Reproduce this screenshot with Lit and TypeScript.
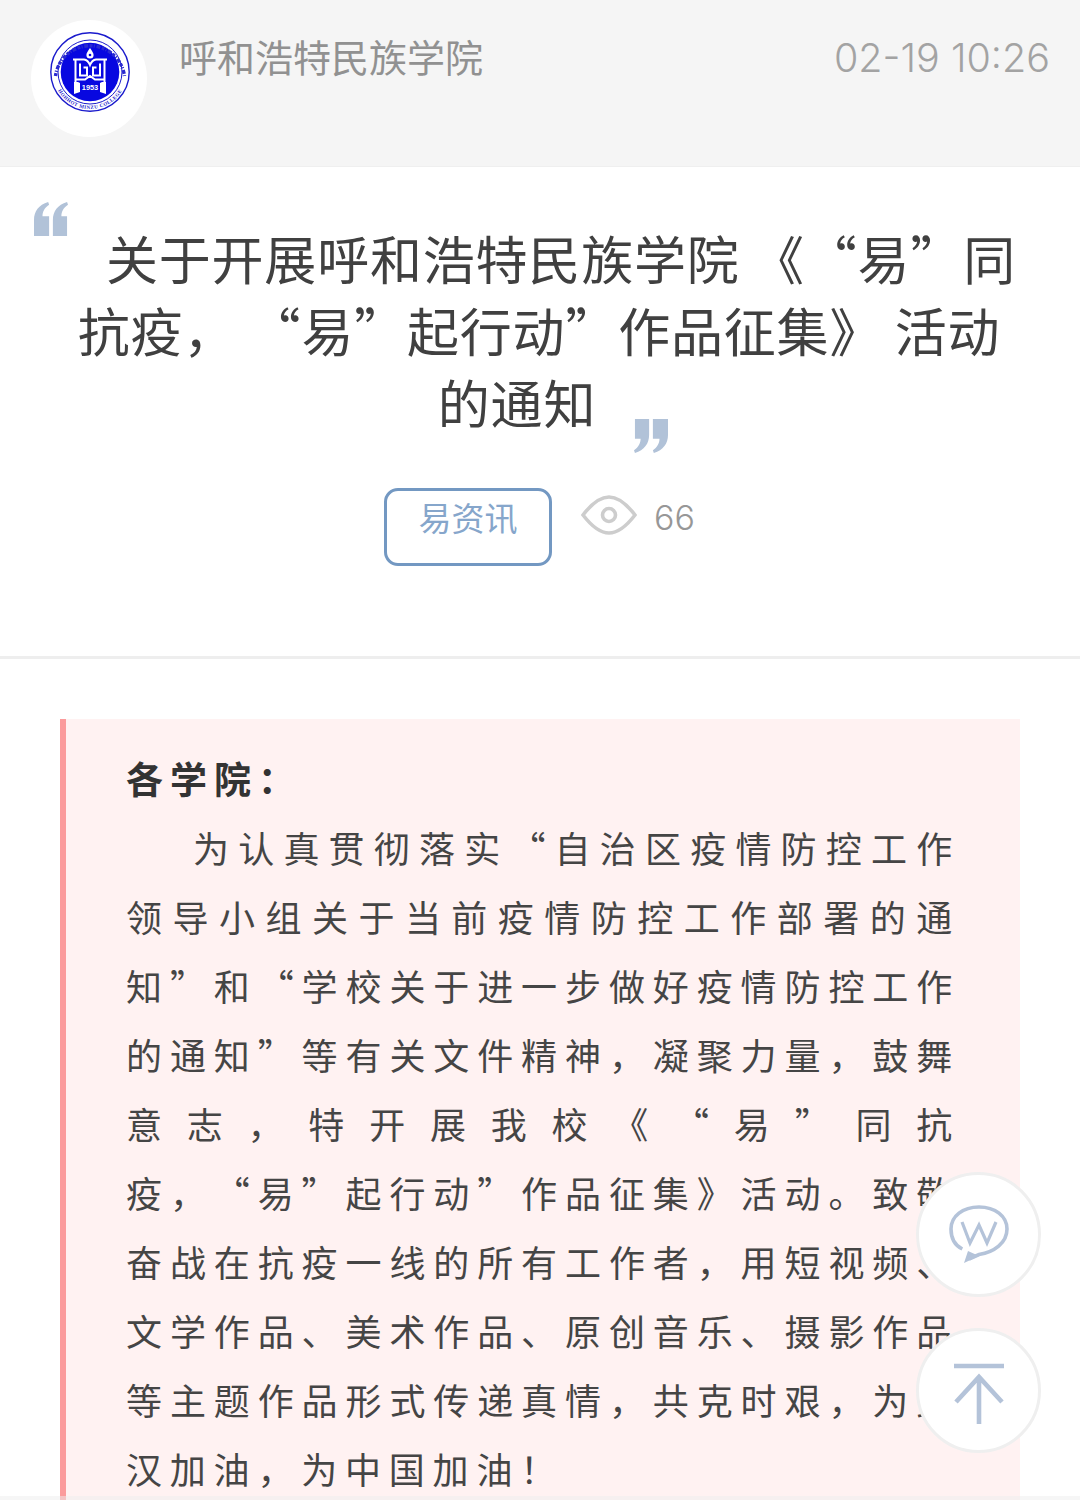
import { LitElement, html, css, svg } from "lit";
import { customElement } from "lit/decorators.js";

@customElement("app-root")
export class AppRoot extends LitElement {
  static styles = css`
    :host { display: block; width: 1080px; height: 1500px; overflow: hidden; position: relative; background: #fff; font-family: "Noto Sans CJK SC", "Noto Sans", sans-serif; text-spacing-trim: space-all; }
    .head { height: 167px; box-sizing: border-box; background: #f5f5f5; border-bottom: 1px solid #efefef; padding: 20px 30px 0 31px; display: flex; align-items: flex-start; }
    .avatar { width: 116px; height: 117px; box-sizing: border-box; padding-bottom: 14px; padding-left: 2px; border-radius: 50%; background: #fff; display: flex; align-items: center; justify-content: center; flex: none; }
    .org { margin-left: 32px; font-size: 38px; line-height: 72px; color: #919191; flex: 1; font-weight: 400; }
    .time { font-size: 39.5px; line-height: 76px; color: #a3a3a3; font-family: Inter, Roboto, sans-serif; font-weight: 300; }
    .hero { height: 492px; box-sizing: border-box; border-bottom: 3px solid #eee; position: relative; padding: 55px 60px 0; }
    .title { font-size: 52px; line-height: 72px; letter-spacing: 0.8px; text-align: center; color: #404040; font-weight: 400; margin: 0; width: 958px; }
    .ph { display: inline-block; width: 44px; height: 1px; }
    .q1 { position: absolute; left: 33px; top: 35px; }
    .q2 { position: absolute; left: 633px; top: 252px; }
    .meta { display: flex; align-items: flex-start; margin-top: 50px; margin-left: 324px; }
    .tag { width: 168px; height: 78px; box-sizing: border-box; border: 3px solid #7398c2; border-radius: 14px; color: #86a6cb; font-size: 33px; line-height: 52px; text-align: center; font-weight: 400; }
    .eye { margin-left: 29px; margin-top: 6px; display: block; }
    .views { margin-left: 17px; font-size: 34px; line-height: 60px; color: #979797; font-family: Inter, Roboto, sans-serif; font-weight: 300; }
    .box { margin: 60px 60px 0; background: #fff2f2; border-left: 6px solid #fb9b9c; padding: 25px 60px 0 60px; height: 790px; }
    .lead { font-size: 37px; line-height: 69px; font-weight: 700; letter-spacing: 7px; color: #333; }
    .body { font-size: 36px; line-height: 69px; letter-spacing: 7.8px; color: #454545; font-weight: 400; }
    .l { display: block; text-align: justify; text-align-last: justify; white-space: nowrap; }
    .l.end { text-align-last: left; }
    .l.ind { padding-left: 67px; }
    .fab { position: absolute; left: 916px; width: 125px; height: 125px; box-sizing: border-box; border-radius: 50%; background: #fff; border: 3px solid #efefef; display: flex; align-items: center; justify-content: center; }
    .f1 { top: 1172px; }
    .f2 { top: 1328px; }
    .up { margin-top: 6px; }
    .fade { position: absolute; left: 0; right: 0; bottom: 0; height: 4px; background: #eeeeee; opacity: .5; }
  `;

  logo() {
    return html`<svg width="84" height="84" viewBox="0 0 84 84">
      <defs>
        <path id="arcb" d="M5 42 A37 37 0 0 0 79 42"></path>
      </defs>
      <circle cx="42" cy="42" r="39.2" fill="#fff" stroke="#1a1acc" stroke-width="1.4"></circle>
      <circle cx="42" cy="42" r="32" fill="none" stroke="#1a1acc" stroke-width="1"></circle>
      <circle cx="42" cy="42" r="29.3" fill="#0808e0"></circle>
      <text font-size="5" font-family="Liberation Serif, serif" font-weight="700" fill="#1a1acc" letter-spacing=".5"><textPath href="#arcb" startOffset="50%" text-anchor="middle">HOHHOT MINZU COLLEGE</textPath></text>
      <path d="M7.5 46 A34.8 34.8 0 0 1 76.5 46" fill="none" stroke="#2a2ad0" stroke-width="3.4" stroke-dasharray="3 1.2 1.2 1.6 4 1.4"></path>
      <g fill="none" stroke="#fff" stroke-width="2">
        <path d="M25 29.5 H36 Q40 30 42 35 Q44 30 48 29.5 H59"></path>
        <path d="M27.5 29.5 V53 M56.5 29.5 V53"></path>
        <path d="M32 33.5 V45.5 H39 V37.5 H35.5 M52 33.5 V45.5 H45 V37.5 H48.5"></path>
        <path d="M27.5 49.5 H37 L42 46 L47 49.5 H56.5"></path>
      </g>
      <path d="M42 18 C44 21 45.6 23 45.6 25 A3.6 3.6 0 0 1 38.4 25 C38.4 23 40 21 42 18 Z" fill="#fff"></path>
      <circle cx="42" cy="25" r="1.3" fill="#0808e0"></circle>
      <path d="M26 52 H30 L32 53 V62 L26 64 Z M58 52 H54 L52 53 V62 L58 64 Z" fill="#fff"></path>
      <text x="42" y="60" font-size="7.4" text-anchor="middle" font-family="Liberation Sans, sans-serif" fill="#fff" font-weight="700">1953</text>
    </svg>`;
  }

  quote(flip: boolean) {
    return svg`<svg width="36" height="34" viewBox="0 0 38 36" style=${flip ? "transform:rotate(180deg)" : ""}>
      <path fill="#b1c2d8" d="M16 0 L17 3 C12 6 10 11 10 15 H17 V36 H1 V19 C1 10 6 3 16 0 Z"></path>
      <path fill="#b1c2d8" d="M36 0 L37 3 C32 6 30 11 30 15 H36 V36 H21 V19 C21 10 26 3 36 0 Z"></path>
    </svg>`;
  }

  render() {
    return html`
      <div class="head">
        <div class="avatar">${this.logo()}</div>
        <div class="org">呼和浩特民族学院</div>
        <div class="time">02-19 10:26</div>
      </div>
      <div class="hero">
        <div class="q1">${this.quote(false)}</div>
        <h1 class="title"><span class="ph"></span>关于开展呼和浩特民族学院 《“易”同抗疫， “易”起行动”作品征集》 活动的通知<span class="ph"></span></h1>
        <div class="q2">${this.quote(true)}</div>
        <div class="meta">
          <div class="tag">易资讯</div>
          <svg class="eye" width="56" height="42" viewBox="0 0 56 42" fill="none" stroke="#cdcdcd" stroke-width="3.6">
            <path d="M2 21 C12 8 20 3 28 3 C36 3 44 8 54 21 C44 34 36 39 28 39 C20 39 12 34 2 21 Z"></path>
            <circle cx="28" cy="21" r="6.5"></circle>
          </svg>
          <div class="views">66</div>
        </div>
      </div>
      <div class="box">
        <div class="lead">各学院：</div>
        <div class="body">
          <span class="l ind">为认真贯彻落实“自治区疫情防控工作</span>
          <span class="l">领导小组关于当前疫情防控工作部署的通</span>
          <span class="l">知”和“学校关于进一步做好疫情防控工作</span>
          <span class="l">的通知”等有关文件精神，凝聚力量，鼓舞</span>
          <span class="l">意志，特开展我校《“易”同抗</span>
          <span class="l">疫，“易”起行动”作品征集》活动。致敬</span>
          <span class="l">奋战在抗疫一线的所有工作者，用短视频、</span>
          <span class="l">文学作品、美术作品、原创音乐、摄影作品</span>
          <span class="l">等主题作品形式传递真情，共克时艰，为武</span>
          <span class="l end">汉加油，为中国加油！</span>
        </div>
      </div>
      <div class="fab f1">
        <svg width="60" height="60" viewBox="0 0 60 60" fill="none" stroke="#b4c3d9" stroke-width="3.6">
          <path d="M13.3 44 C5 40 2 32 2 24 C2 11 14 2 30 2 C46 2 58 11 58 24 C58 38 45 47 30 49.5 L20 54"></path>
          <path d="M19 46 L15 58 L30 51 Z" fill="#b4c3d9" stroke="none"></path>
          <path d="M13 17 L21 38 L30 20 L38 38 L47 17" stroke-width="3.2"></path>
        </svg>
      </div>
      <div class="fab f2">
        <svg class="up" width="52" height="62" viewBox="0 0 52 62" fill="none" stroke="#b4c3d9" stroke-width="4.6">
          <path d="M1 3 H51"></path>
          <path d="M26 61 V14 M3 39 L26 14 L49 39"></path>
        </svg>
      </div>
      <div class="fade"></div>
    `;
  }
}
